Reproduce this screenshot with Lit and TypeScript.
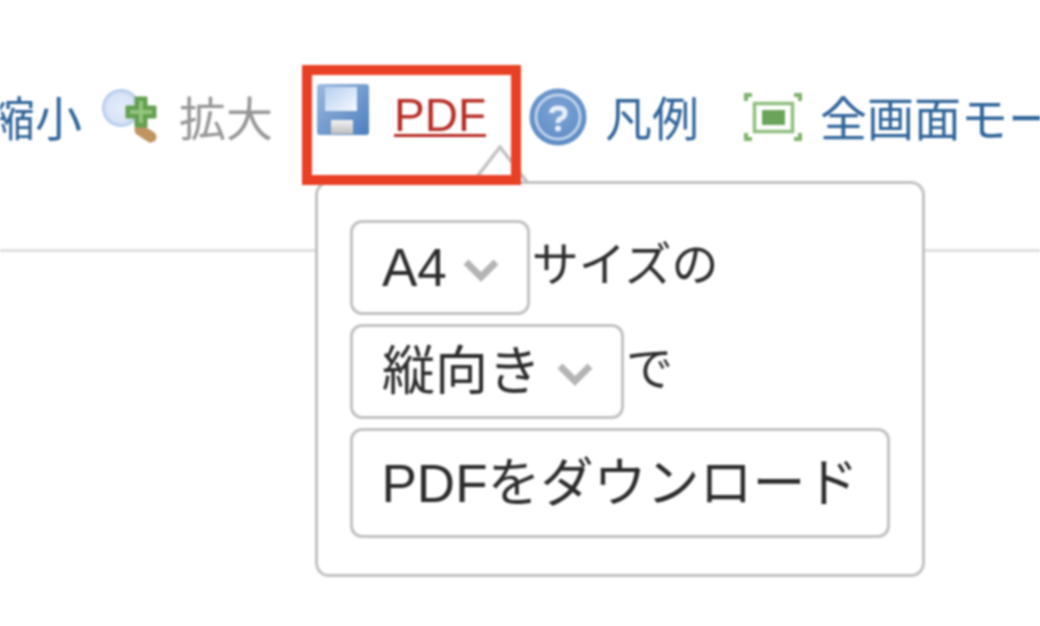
import { LitElement, html, css } from "lit";
import { customElement } from "lit/decorators.js";

@customElement("app-root")
export class AppRoot extends LitElement {
  static styles = css`
    :host {
      display: block;
      position: relative;
      width: 1040px;
      height: 626px;
      overflow: hidden;
      background: #fff;
      font-family: "Liberation Sans", "Noto Sans CJK JP", sans-serif;
      filter: blur(0.8px);
    }
    .header {
      height: 252px;
      box-sizing: border-box;
      border-bottom: 3px solid #e0e0e0;
      padding-top: 83px;
    }
    .toolbar {
      display: flex;
      align-items: flex-start;
      margin-left: -12px;
      white-space: nowrap;
      font-size: 47px;
      line-height: 70px;
      color: #2f6498;
    }
    .item { display: flex; align-items: flex-start; flex: none; }
    .item svg { flex: none; display: block; }
    .item span { margin-top: 2px; }
    .zoom { margin-left: 20px; }
    .zoom svg { margin-top: 5px; margin-right: 21px; }
    .zoom span { color: #969696; }
    .pdf { margin-left: 43px; }
    .pdf svg { margin-right: 25px; }
    .item.pdf span {
      margin-top: -3px;
      font-size: 46px;
      color: #b52c24;
      text-decoration: underline;
      text-decoration-thickness: 3px;
      text-underline-offset: 3px;
    }
    .help { margin-left: 43px; }
    .help svg { margin-top: 5px; margin-right: 18px; }
    .full { margin-left: 45px; }
    .full svg { margin-top: 10px; margin-right: 18px; }
    .popover {
      position: absolute;
      left: 315px;
      top: 181px;
      width: 610px;
      box-sizing: border-box;
      background: #fff;
      border: 3px solid #c2c2c2;
      border-radius: 14px;
      padding: 36px 32px;
      display: flex;
      flex-direction: column;
      align-items: flex-start;
      gap: 9px;
      color: #2b2b2b;
      font-size: 47px;
    }
    .arrow {
      position: absolute;
      left: 472px;
      top: 145px;
      display: block;
    }
    .row { display: flex; align-items: baseline; gap: 2px; line-height: 1; }
    .control {
      box-sizing: border-box;
      border: 3px solid #c2c2c2;
      border-radius: 12px;
      font-size: 53px;
      background: #fff;
      color: #2b2b2b;
    }
    .select {
      display: inline-flex;
      align-items: center;
      gap: 16px;
      height: 95px;
      padding: 0 28px 0 29px;
      line-height: 1;
    }
    .select svg { display: block; flex: none; margin-top: 4px; }
    .label { position: relative; top: -5px; }
    .button {
      display: flex;
      align-items: center;
      justify-content: center;
      width: 540px;
      height: 110px;
      line-height: 1;
    }
    .mark {
      position: absolute;
      left: 302px;
      top: 65px;
      width: 219px;
      height: 120px;
      box-sizing: border-box;
      border: 10px solid #e94025;
    }
  `;

  private chevron() {
    return html`<svg width="36" height="24" viewBox="0 0 36 24"><path d="M3 4 L18 19 L33 4" fill="none" stroke="#b4b4b4" stroke-width="7"/></svg>`;
  }

  render() {
    return html`
      <div class="header">
        <div class="toolbar">
          <div class="item"><span>縮小</span></div>
          <div class="item zoom">
            <svg width="56" height="56" viewBox="0 0 56 56">
              <defs>
                <radialGradient id="lens" cx="0.5" cy="0.5" r="0.5">
                  <stop offset="0" stop-color="#e4ecf9"/><stop offset="0.75" stop-color="#d8e4f6"/><stop offset="1" stop-color="#adc6ea"/>
                </radialGradient>
              </defs>
              <path d="M38 42 L49 49" fill="none" stroke="#bf9460" stroke-width="11" stroke-linecap="round"/>
              <circle cx="19" cy="20" r="19" fill="url(#lens)"/>
              <path d="M33 9 H45 V18 H54 V30 H45 V39 H33 V30 H24 V18 H33Z" fill="#659f52" stroke="#659f52" stroke-width="1" stroke-linejoin="round"/>
              <path d="M37 13 H41 V22 H50 V26 H41 V35 H37 V26 H28 V22 H37Z" fill="#93c47c"/>
            </svg>
            <span>拡大</span>
          </div>
          <div class="item pdf">
            <svg width="53" height="53" viewBox="0 0 53 53">
              <defs>
                <linearGradient id="disk" x1="0" y1="0" x2="1" y2="1">
                  <stop offset="0" stop-color="#9db9df"/><stop offset="1" stop-color="#4c7fbe"/>
                </linearGradient>
                <linearGradient id="shine" x1="0" y1="0" x2="1" y2="1">
                  <stop offset="0" stop-color="#b6d0ef"/><stop offset="1" stop-color="#f6f9fe"/>
                </linearGradient>
                <linearGradient id="slot" x1="0" y1="0" x2="0" y2="1">
                  <stop offset="0" stop-color="#f4f4f4"/><stop offset="1" stop-color="#bdbdbd"/>
                </linearGradient>
              </defs>
              <rect x="1" y="1" width="52" height="51" rx="3" fill="url(#disk)"/>
              <rect x="9" y="4" width="32" height="24" fill="url(#shine)"/>
              <rect x="15" y="37" width="22" height="14" fill="url(#slot)"/>
            </svg>
            <span>PDF</span>
          </div>
          <div class="item help">
            <svg width="58" height="60" viewBox="0 0 58 60">
              <defs>
                <radialGradient id="ball" cx="0.5" cy="0.4" r="0.65">
                  <stop offset="0" stop-color="#7ea4d6"/><stop offset="1" stop-color="#5a88c2"/>
                </radialGradient>
              </defs>
              <circle cx="29" cy="29" r="28.500" fill="url(#ball)"/>
              <circle cx="29" cy="29" r="22" fill="none" stroke="#bfd3ec" stroke-width="3"/>
              <path d="M22.500 25 Q23 20 29 20 Q36 20 36 25 Q36 29 31 31 Q29 32 29 35" fill="none" stroke="#e8f0fa" stroke-width="5"/>
              <circle cx="29" cy="40.500" r="3" fill="#e8f0fa"/>
            </svg>
            <span>凡例</span>
          </div>
          <div class="item full">
            <svg width="58" height="48" viewBox="0 0 58 48">
              <path d="M2 8 V2 H8 M50 2 H56 V8 M2 40 V46 H8 M50 46 H56 V40" fill="none" stroke="#7db36a" stroke-width="4"/>
              <rect x="10.500" y="10.500" width="38" height="28" fill="none" stroke="#8fbf7e" stroke-width="3.500"/>
              <rect x="18" y="17" width="23" height="15" fill="#6ba35a"/>
            </svg>
            <span>全画面モード</span>
          </div>
        </div>
      </div>

      <svg class="arrow" width="56" height="38" viewBox="0 0 56 38">
        <path d="M1 37 L28 2 L55 37" fill="#fff" stroke="#c2c2c2" stroke-width="3.500"/>
      </svg>
      <div class="popover">
        <div class="row">
          <div class="control select"><span>A4</span>${this.chevron()}</div>
          <span class="label">サイズの</span>
        </div>
        <div class="row">
          <div class="control select"><span>縦向き</span>${this.chevron()}</div>
          <span class="label">で</span>
        </div>
        <div class="control button">PDFをダウンロード</div>
      </div>
      <div class="mark"></div>
    `;
  }
}
